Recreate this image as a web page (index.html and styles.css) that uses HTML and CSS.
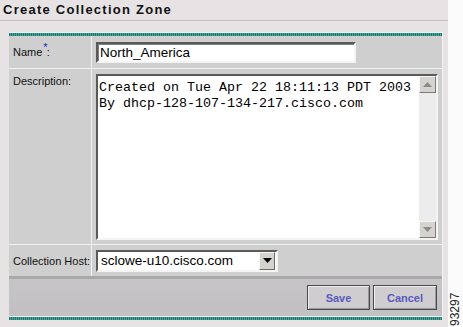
FILE: index.html
```html
<!DOCTYPE html>
<html>
<head>
<meta charset="utf-8">
<link rel="stylesheet" href="styles.css">
</head>
<body>
<div class="page">
  <div class="main">
    <div class="header"><h1 class="title">Create Collection Zone</h1></div>
    <div class="panel">
      <div class="teal"></div>
      <div class="row row-name">
        <div class="label label-mid">Name<span class="req">*</span>:</div>
        <div class="cell cell-mid"><div class="input">North_America</div></div>
      </div>
      <div class="row row-desc">
        <div class="label label-top">Description:</div>
        <div class="cell cell-desc">
          <div class="textarea">
            <div class="ta-text">Created on Tue Apr 22 18:11:13 PDT 2003<br>By dhcp-128-107-134-217.cisco.com</div>
            <div class="scrollbar">
              <div class="sb-btn"><svg width="9" height="5" viewBox="0 0 9 5"><path d="M0 5 L4.5 0 L9 5 Z" fill="#8a8a8a"/></svg></div>
              <div class="sb-track"></div>
              <div class="sb-btn"><svg width="9" height="5" viewBox="0 0 9 5"><path d="M0 0 L4.5 5 L9 0 Z" fill="#8a8a8a"/></svg></div>
            </div>
          </div>
        </div>
      </div>
      <div class="row row-host">
        <div class="label label-mid">Collection Host:</div>
        <div class="cell cell-mid">
          <div class="select">
            <span class="sel-text">sclowe-u10.cisco.com</span>
            <span class="sel-btn"><svg width="9" height="5" viewBox="0 0 9 5"><path d="M0 0 L4.5 5 L9 0 Z" fill="#000"/></svg></span>
          </div>
        </div>
      </div>
      <div class="buttons">
        <button class="btn">Save</button>
        <button class="btn">Cancel</button>
      </div>
      <div class="teal"></div>
    </div>
  </div>
  <div class="side"><span class="figno">93297</span></div>
</div>
</body>
</html>
```

FILE: styles.css
```css
html, body {
  margin: 0;
  padding: 0;
  background: #fbfbfb;
}
.page {
  display: flex;
  width: 463px;
  height: 327px;
  font-family: "Liberation Sans", Arial, sans-serif;
}
.main {
  width: 448px;
  height: 327px;
  background: #e7e3e5;
}
.header {
  height: 20px;
  border-bottom: 1px solid #c6c2c4;
}
.title {
  margin: 0;
  padding: 3px 0 0 3px;
  font-size: 13px;
  line-height: 14px;
  font-weight: bold;
  letter-spacing: 1.25px;
  color: #111;
}
.panel {
  margin: 11px 0 0 9px;
  width: 433px;
  border-right: 1px solid #f4f4f4;
  background: #cfcfcf;
}
.teal {
  height: 3px;
  border-top: 1px solid #e8f4f2;
  background: repeating-linear-gradient(90deg, #1a7a72 0, #1a7a72 1px, #4f9f97 1px, #4f9f97 2px);
}
.row {
  display: flex;
  border-bottom: 1px solid #f2f2f2;
}
.row-name { height: 32px; }
.row-desc { height: 175px; }
.row-host { height: 31px; border-bottom: none; }
.label {
  width: 78px;
  padding-left: 4px;
  border-right: 1px solid #f2f2f2;
  font-size: 11px;
  color: #111;
}
.label-mid {
  display: flex;
  align-items: center;
}
.label-top {
  padding-top: 6px;
  line-height: 12px;
}
.req {
  color: #1c1cc8;
  font-size: 11px;
  position: relative;
  top: -5px;
  margin: 0 -1px 0 1px;
}
.cell {
  flex: 1;
  padding-left: 4px;
}
.cell-mid {
  display: flex;
  align-items: center;
}
.input {
  width: 254px;
  height: 17px;
  background: #fff;
  border-top: 2px solid #5a5a5a;
  border-left: 2px solid #5a5a5a;
  border-right: 2px solid #f4f4f4;
  border-bottom: 2px solid #f4f4f4;
  box-shadow: inset 1px 1px 0 #808080;
  padding-left: 2px;
  font-size: 13.5px;
  line-height: 17px;
  color: #000;
  margin-top: 1px;
}
.cell-desc {
  padding-top: 5px;
}
.textarea {
  display: flex;
  width: 338px;
  height: 162px;
  background: #fff;
  border-top: 2px solid #5a5a5a;
  border-left: 2px solid #5a5a5a;
  border-right: 2px solid #f4f4f4;
  border-bottom: 2px solid #f4f4f4;
}
.ta-text {
  flex: 1;
  padding: 4px 0 0 1px;
  font-family: "Liberation Mono", "Courier New", monospace;
  font-size: 13.33px;
  line-height: 16px;
  color: #000;
  white-space: nowrap;
}
.scrollbar {
  width: 17px;
  display: flex;
  flex-direction: column;
  background: #ececec;
}
.sb-track { flex: 1; }
.sb-btn {
  height: 15px;
  width: 15px;
  background: #d6d3ce;
  border-top: 1px solid #f6f6f6;
  border-left: 1px solid #f6f6f6;
  border-right: 1px solid #7a7a7a;
  border-bottom: 1px solid #7a7a7a;
  display: flex;
  align-items: center;
  justify-content: center;
}
.select {
  display: flex;
  align-items: center;
  width: 178px;
  height: 18px;
  background: #fff;
  border-top: 2px solid #5a5a5a;
  border-left: 2px solid #5a5a5a;
  border-right: 2px solid #f4f4f4;
  border-bottom: 2px solid #f4f4f4;
}
.sel-text {
  flex: 1;
  padding-left: 3px;
  font-size: 13.5px;
  line-height: 18px;
  color: #000;
}
.sel-btn {
  width: 14px;
  height: 16px;
  margin-right: 1px;
  background: #d6d3ce;
  border-top: 1px solid #f6f6f6;
  border-left: 1px solid #f6f6f6;
  border-right: 1px solid #6a6a6a;
  border-bottom: 1px solid #6a6a6a;
  display: flex;
  align-items: center;
  justify-content: center;
}
.buttons {
  display: flex;
  justify-content: flex-end;
  gap: 3px;
  padding: 6px 5px 0 0;
  box-sizing: border-box;
  border-top: 3px solid #a9a9a9;
  background: linear-gradient(#c6c4c6, #c2c0c2);
  height: 40px;
}
.btn {
  height: 25px;
  width: 64px;
  padding: 0;
  background: #cfcdcf;
  border: 1px solid #4a4a4a;
  box-shadow: inset 1px 1px 0 #efefef, inset -1px -1px 0 #9a9a9a;
  font-family: "Liberation Sans", Arial, sans-serif;
  font-size: 11px;
  font-weight: bold;
  color: #5a5ac0;
}
.btn:first-child { width: 63px; }
.side {
  width: 15px;
  position: relative;
}
.figno {
  position: absolute;
  left: 1px;
  bottom: 1px;
  transform-origin: left bottom;
  transform: rotate(-90deg) translate(0, 13px);
  font-size: 12px;
  line-height: 13px;
  color: #222;
  white-space: nowrap;
}
```
